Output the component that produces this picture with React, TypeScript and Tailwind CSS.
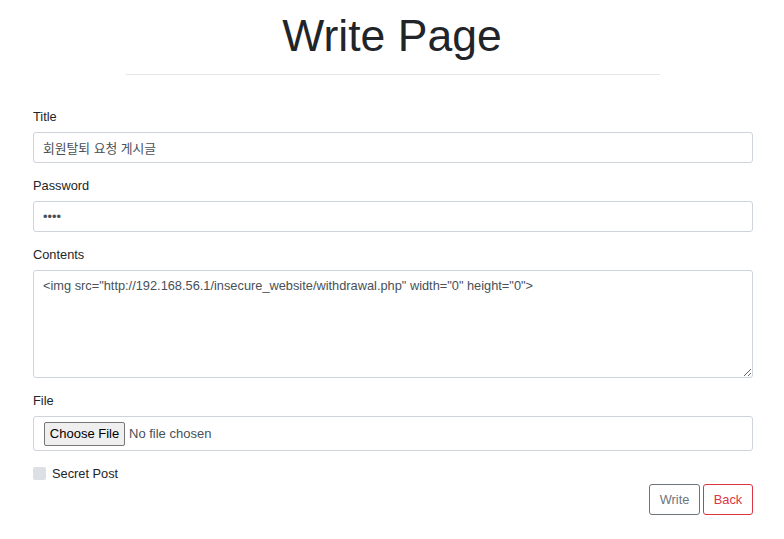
import React from "react";

const font = { fontFamily: '"Liberation Sans", "Noto Sans CJK KR", Arial, sans-serif' };

function Label({ children }: { children: React.ReactNode }) {
  return <div className="h-[21px] leading-[21px] text-[12.8px] text-[#212529] mb-[5px]">{children}</div>;
}

const inputCls =
  "h-[31px] w-full border border-[#ced4da] rounded-[3px] px-[9px] text-[12.8px] text-[#495057] outline-none";

export default function App() {
  return (
    <div className="w-[784px] h-[539px] bg-white overflow-hidden" style={font}>
      <div className="pt-[9px] text-center text-[44.5px] leading-[53px] text-[#212529]">Write Page</div>
      <div className="mt-[12px] mx-auto w-[534px] h-px bg-[#e6e6e6] translate-x-[1px]" />
      <form className="pl-[33px] pr-[31px] pt-[31px] flex flex-col" onSubmit={(e) => e.preventDefault()}>
        <Label>Title</Label>
        <input readOnly defaultValue="회원탈퇴 요청 게시글" className={inputCls} style={font} />
        <div className="h-[12px]" />
        <Label>Password</Label>
        <input readOnly type="password" defaultValue="1234" className={inputCls} style={font} />
        <div className="h-[12px]" />
        <Label>Contents</Label>
        <textarea
          readOnly
          defaultValue={'<img src="http://192.168.56.1/insecure_website/withdrawal.php" width="0" height="0">'}
          className="block h-[108px] w-full border border-[#ced4da] rounded-[3px] px-[9px] py-[5px] text-[12.8px] leading-[19px] text-[#495057] outline-none"
          style={font}
        />
        <div className="h-[12px]" />
        <Label>File</Label>
        <div className="h-[35px] w-full border border-[#ced4da] rounded-[3px] pl-[10px] flex items-center text-[13px] text-[#495057]">
          <span className="h-[24px] w-[81px] flex items-center justify-center bg-[#efefef] border border-[#767676] rounded-[2px] text-black">
            Choose File
          </span>
          <span className="ml-[4px]">No file chosen</span>
        </div>
        <div className="h-[12px]" />
        <div className="h-[21px] flex items-center text-[12.8px] text-[#212529]">
          <span className="w-[13px] h-[13px] rounded-[2px] bg-[#dcdfe4]" />
          <span className="ml-[6px]">Secret Post</span>
        </div>
        <div className="flex justify-end gap-[3px]">
          <button
            type="button"
            className="h-[31px] w-[51px] border border-[#6c757d] rounded-[3px] text-[12.8px] text-[#6c757d] bg-white"
            style={font}
          >
            Write
          </button>
          <button
            type="button"
            className="h-[31px] w-[50px] border border-[#dc3545] rounded-[3px] text-[12.8px] text-[#dc3545] bg-white"
            style={font}
          >
            Back
          </button>
        </div>
      </form>
    </div>
  );
}
